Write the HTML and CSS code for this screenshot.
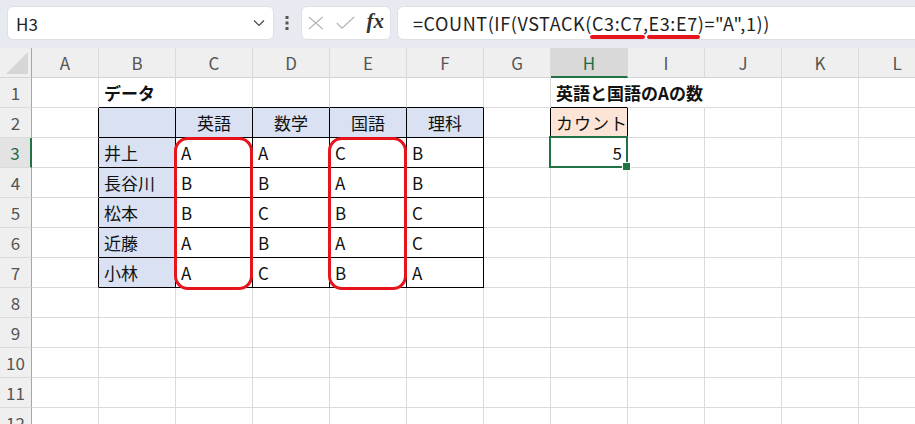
FILE: index.html
```html
<!DOCTYPE html>
<html>
<head>
    <title>VSTACK</title>
    <link rel="stylesheet" href="styles.css">
</head>
<body>
    <div class="topbar">
        <div class="namebox">
            <span class="name">H3</span>
            <svg class="chevron" width="12" height="8" viewBox="0 0 12 8">
                <path d="M1 1.5 L6 6.5 L11 1.5" fill="none" stroke="#444" stroke-width="1.2"/>
            </svg>
        </div>
        <svg class="dots" width="4" height="14" viewBox="0 0 4 14">
            <rect x="0.5" y="0" width="3" height="3" fill="#555"/>
            <rect x="0.5" y="5.5" width="3" height="3" fill="#555"/>
            <rect x="0.5" y="11" width="3" height="3" fill="#555"/>
        </svg>
        <div class="fxbox">
            <svg width="18" height="16" viewBox="0 0 18 16">
                <path d="M1 1 L17 15 M17 1 L1 15" stroke="#b4b4b4" stroke-width="1.3"/>
            </svg>
            <svg width="22" height="16" viewBox="0 0 22 16">
                <path d="M1 8 L7 14 L21 1" fill="none" stroke="#b4b4b4" stroke-width="1.3"/>
            </svg>
            <span class="fx">fx</span>
        </div>
        <div class="formula">=COUNT(IF(VSTACK(<span class="mark">C3:C7</span>,<span class="mark">E3:E7</span>)="A",1))</div>
    </div>

    <div class="sheet" id="sheet">
        <div class="ring ring-c"></div>
        <div class="ring ring-e"></div>
    </div>

    <script>
        var cols = ['A', 'B', 'C', 'D', 'E', 'F', 'G', 'H', 'I', 'J', 'K', 'L'];
        var data = {
            1: { B: 'データ', H: '英語と国語のAの数' },
            2: { C: '英語', D: '数学', E: '国語', F: '理科', H: 'カウント' },
            3: { B: '井上', C: 'A', D: 'A', E: 'C', F: 'B', H: '5' },
            4: { B: '長谷川', C: 'B', D: 'B', E: 'A', F: 'B' },
            5: { B: '松本', C: 'B', D: 'C', E: 'B', F: 'C' },
            6: { B: '近藤', C: 'A', D: 'B', E: 'A', F: 'C' },
            7: { B: '小林', C: 'A', D: 'C', E: 'B', F: 'A' }
        };
        var sheet = document.getElementById('sheet');

        function add(cls, text) {
            var d = document.createElement('div');
            d.className = cls;
            if (text) d.textContent = text;
            sheet.appendChild(d);
            return d;
        }

        var corner = add('corner');
        corner.innerHTML = '<svg width="22" height="22" viewBox="0 0 22 22"><path d="M0 22 L22 22 L22 0 Z" fill="#d6d6d6"/></svg>';
        cols.forEach(function (c) {
            add(c === 'H' ? 'colhead active' : 'colhead', c);
        });

        for (var r = 1; r <= 12; r++) {
            add(r === 3 ? 'rowhead active' : 'rowhead', String(r));
            cols.forEach(function (c, i) {
                var cls = ['cell'];
                var inTable = r >= 2 && r <= 7 && i >= 1 && i <= 5;
                if (inTable) cls.push('tb');
                if (r >= 2 && r <= 7 && c === 'A') cls.push('bl');
                if (r === 1 && i >= 1 && i <= 5) cls.push('bt');
                if (inTable && (r === 2 || c === 'B')) cls.push('fill');
                if (r === 2 && i >= 2 && i <= 5) cls.push('center');
                if (r === 1) cls.push('bold');
                if (r === 1 && (c === 'H' || c === 'I')) cls.push('nr');
                if (r === 1 && c === 'H') cls.push('bt');
                if (r === 2 && c === 'G') cls.push('bl');
                if (r === 2 && c === 'H') cls.push('tb', 'count');
                if (r === 3 && c === 'H') cls.push('sel', 'num');
                var txt = data[r] && data[r][c];
                add(cls.join(' '), txt);
            });
        }
    </script>
</body>
</html>
```

FILE: styles.css
```css
* {
    box-sizing: border-box;
}

body {
    margin: 0;
    width: 915px;
    height: 424px;
    overflow: hidden;
    background: #fff;
    font-family: "Noto Sans CJK JP", "Noto Sans", sans-serif;
}

.topbar {
    display: flex;
    align-items: center;
    height: 48px;
    padding: 0 0 2px 7px;
    background-color: #e7eaf0;
}

.namebox {
    display: flex;
    align-items: center;
    justify-content: space-between;
    width: 267px;
    height: 34px;
    padding: 0 8px 0 8px;
    background: #fff;
    border: 1px solid #dde0e5;
    border-radius: 6px;
}

.name {
    font-size: 17px;
    color: #222;
}

.dots {
    margin: 0 12px 0 11px;
}

.fxbox {
    display: flex;
    align-items: center;
    gap: 12px;
    width: 90px;
    height: 34px;
    padding: 0 6px;
    background: #fff;
    border: 1px solid #dde0e5;
    border-radius: 6px;
}

.fx {
    font-family: "Liberation Serif", serif;
    font-style: italic;
    font-weight: bold;
    font-size: 21px;
    color: #333;
    margin-top: -3px;
}

.formula {
    flex: 1;
    height: 34px;
    margin-left: 6px;
    padding-left: 15px;
    line-height: 32px;
    font-size: 18px;
    letter-spacing: 0.6px;
    color: #222;
    background: #fff;
    border: 1px solid #dde0e5;
    border-right: 0;
    border-radius: 6px 0 0 6px;
}

.mark {
    position: relative;
}

.mark::after {
    content: "";
    position: absolute;
    left: -2px;
    right: -2px;
    bottom: -3px;
    height: 4px;
    border-radius: 2px;
    background: #e8141c;
}

.sheet {
    position: relative;
    display: grid;
    grid-template-columns: 32px 67px repeat(5, 77px) 67px repeat(5, 77px);
    grid-auto-rows: 30px;
}

.corner,
.colhead,
.rowhead {
    background: #efefef;
    color: #555;
    font-size: 17px;
}

.corner {
    display: flex;
    align-items: flex-end;
    justify-content: flex-end;
    padding: 0 3px 3px 0;
    border-right: 1px solid #a6a6a6;
    border-bottom: 1px solid #d4d4d4;
}

.colhead {
    display: flex;
    align-items: center;
    justify-content: center;
    border-right: 1px solid #dadada;
    border-bottom: 1px solid #d4d4d4;
}

.colhead.active {
    background: #d9d9d9;
    color: #1e6b3f;
    border-bottom: 2px solid #217346;
}

.rowhead {
    display: flex;
    align-items: center;
    justify-content: center;
    border-right: 1px solid #a6a6a6;
    border-bottom: 1px solid #dadada;
}

.rowhead.active {
    background: #e3e3e3;
    color: #1e6b3f;
    border-right: 2px solid #217346;
}

.cell {
    position: relative;
    padding: 0 5px;
    line-height: 29px;
    font-size: 17px;
    color: #111;
    white-space: nowrap;
    border-right: 1px solid #dadada;
    border-bottom: 1px solid #dadada;
}

.cell.nr {
    border-right-color: transparent;
}

.cell.bold {
    font-weight: bold;
    z-index: 1;
}

.cell.tb {
    border-right-color: #000;
    border-bottom-color: #000;
}

.cell.bl {
    border-right-color: #000;
}

.cell.bt {
    border-bottom-color: #000;
}

.cell.fill {
    background: #d9e1f2;
}

.cell.center {
    text-align: center;
}

.cell.count {
    background: #fce4d6;
    letter-spacing: 1px;
}

.cell.num {
    text-align: right;
}

.cell.sel::after {
    content: "";
    position: absolute;
    left: -2px;
    top: -2px;
    right: -1px;
    bottom: -1px;
    border: 2px solid #217346;
}

.cell.sel::before {
    content: "";
    position: absolute;
    right: -4px;
    bottom: -4px;
    width: 7px;
    height: 7px;
    background: #217346;
    border: 1px solid #fff;
    z-index: 2;
}

.ring {
    position: absolute;
    top: 89px;
    width: 79px;
    height: 153px;
    border: 3px solid #e8141c;
    border-radius: 14px;
    z-index: 3;
}

.ring-c {
    left: 174px;
}

.ring-e {
    left: 328px;
}
```
